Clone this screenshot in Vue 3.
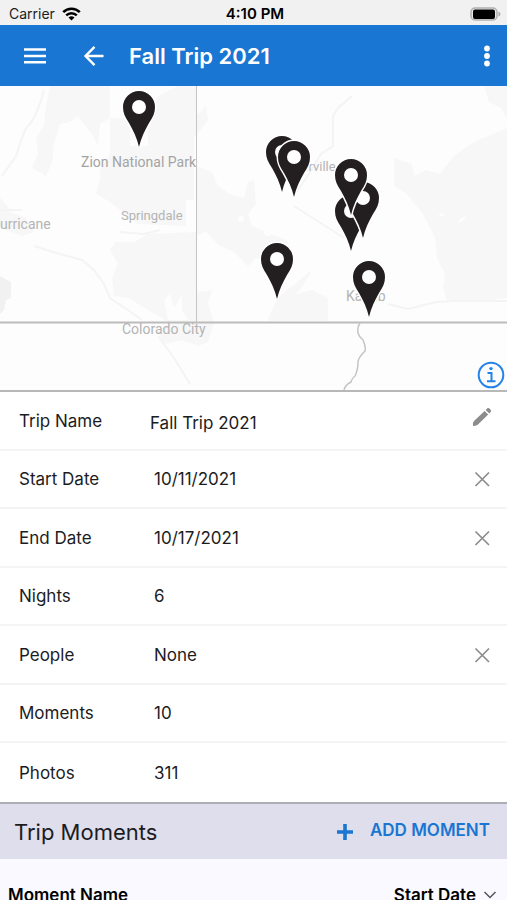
<script setup>
import { ref } from 'vue';

const tripName = ref('Fall Trip 2021');

const details = ref([
  { label: 'Start Date', value: '10/11/2021', clearable: true },
  { label: 'End Date', value: '10/17/2021', clearable: true },
  { label: 'Nights', value: '6' },
  { label: 'People', value: 'None', clearable: true },
  { label: 'Moments', value: '10' },
  { label: 'Photos', value: '311' },
]);

// Tip of each pin on the map, back to front
const pins = [
  { x: 139, y: 61 },
  { x: 282, y: 106 },
  { x: 294, y: 111 },
  { x: 351, y: 165 },
  { x: 363, y: 152 },
  { x: 351, y: 129 },
  { x: 277, y: 213 },
  { x: 369, y: 231 },
];

const clearValue = (row) => {
  row.value = 'None';
};
</script>

<template>
  <div class="app">
    <div class="status-bar">
      <div class="carrier">
        <span>Carrier</span>
        <svg width="19" height="14" viewBox="0 0 19 14" fill="none" stroke="#000">
          <path d="M1.2 5.2a11.8 11.8 0 0 1 16.6 0" stroke-width="2.6" />
          <path d="M4.2 8.4a7.5 7.5 0 0 1 10.6 0" stroke-width="2.4" />
          <path d="M9.5 13.6L6.5 10.6a4.3 4.3 0 0 1 6 0z" fill="#000" stroke="none" />
        </svg>
      </div>
      <span class="time">4:10 PM</span>
      <div class="battery">
        <svg width="31" height="14" viewBox="0 0 31 14">
          <rect x="1" y="1" width="26" height="12" rx="4" fill="#e8e8e8" stroke="#b0b0b0" stroke-width="1.5" />
          <rect x="3" y="2.5" width="22" height="9.5" rx="2" fill="#000" />
          <path d="M28.5 4.5q2 1 2 2.5t-2 2.5z" fill="#a8a8a8" />
        </svg>
      </div>
    </div>

    <header class="toolbar">
      <button class="icon-btn" aria-label="Menu">
        <svg width="24" height="24" viewBox="0 0 24 24" stroke="#fff" stroke-width="2.4">
          <path d="M1 5.5h22M1 12h22M1 18.3h22" />
        </svg>
      </button>
      <button class="icon-btn back" aria-label="Back">
        <svg width="22" height="22" viewBox="0 0 22 22" fill="none" stroke="#fff" stroke-width="2.4">
          <path d="M20.5 11H3M11.500 1.800L2.500 11l9 9.200" />
        </svg>
      </button>
      <h1>{{ tripName }}</h1>
      <button class="icon-btn" aria-label="More">
        <svg width="8" height="24" viewBox="0 0 8 24" fill="#fff">
          <circle cx="4" cy="4.5" r="2.9" />
          <circle cx="4" cy="12" r="2.9" />
          <circle cx="4" cy="19.5" r="2.9" />
        </svg>
      </button>
    </header>

    <div class="map">
      <svg class="map-canvas" viewBox="0 0 507 304" preserveAspectRatio="xMidYMid slice">
        <rect width="507" height="304" fill="#fdfdfd" />

        <!-- Terrain -->
        <g fill="#f7f7f7">
          <path d="M50 0h60v32l-10 6-2 22-6-12-14-18-8 6-10 2-6 20-2 18-6 14-6-4-8-4 6-14-2-16 8-12 2-20z" />
          <path d="M110 32h20v28h18V30l10-20 20-10h18v30l10-10 2 14-6 8-8 10v62h-8v26l-48-2-28-22-14-8 4-16V84l10-16z" />
          <path d="M196 80l16 6 6 14 12 8 14 4 4-16 6-2 2 24-8 10 4 12 34 14 8 14-18 10-20-6-8 8-14-14-14-6-14-14-10 4z" />
          <path d="M0 112l6 6 4 8 16 6 8 14-12 4-22-8z" />
          <path d="M134 156l14-8 48-2v90h-28l-20-12-20-12-14-2-2-18 6-14-8-14 6-8z" />
          <path d="M196 206l16-2-4 14 6 18-6 20-10 4-16-6-18 4-6-12 14-10h24z" />
          <path d="M268 232l10-20 12-10 22-18-8 14-8 10 16-4 16 8v23h-58z" />
          <path d="M394 72l18 6 2 12 12-6 14 4 14-18 20-14 33-14v170l-30 4-30-2-4-12 2-14-8-16-2-20-12-24-16-20-13-8z" />
          <path d="M484 0h23v32l-6-10-12-6z" />
        </g>
        <path d="M0 190l11 6v16l-5 2-2 10-4 4z" fill="#f1f1f1" />
        <g fill="#fdfdfd">
          <path d="M164 214l6-6 4 14 8-14v16l6 10h-20z" />
          <circle cx="268" cy="146" r="4" />
          <circle cx="241" cy="133" r="3" />
          <path d="M458 138q1-7 8-8l-2 4zM438 130l4-3 3 3z" />
        </g>
        <g fill="none" stroke="#f4f4f4" stroke-width="2">
          <path d="M44 4q-8 30-18 38-6 14-10 28L2 90" />
          <path d="M34 160l26 8 22 6 12 10 10 14 6 14 18 12 14 10M158 250l16 22 16 26" />
          <path d="M352 10l-14 12-5 8v30l-12 8-12 20-14 20" />
          <path d="M388 218l20 5 28-7 18-1h53" />
          <path d="M0 124h22M120 146l24 2 16-4M294 120l50 32" />
        </g>

        <!-- State and county lines -->
        <path d="M196.500 0V236" stroke="#c4c4c4" />
        <path d="M0 236.500H507" stroke="#bcbcbc" stroke-width="2" />
        <path d="M360 237q-3 4-2 10 1 4 5 7 3 7 2 11-7 7-7 11 0 8-3 14-3 2-4 6-6 3-7 8" fill="none" stroke="#c4c4c4" stroke-width="1.500" />

        <g class="labels">
          <text x="81" y="81" class="park">Zion National Park</text>
          <text x="121" y="134">Springdale</text>
          <text x="-10" y="143" class="town">Hurricane</text>
          <text x="122" y="248" class="town">Colorado City</text>
          <text x="281" y="85">Orderville</text>
          <text x="346" y="215" class="town">Kanab</text>
        </g>

        <g v-for="(pin, i) in pins" :key="i" :transform="`translate(${pin.x} ${pin.y})`">
          <path
            class="pin"
            d="M0 0C-2-9-6-17-10-24-14-30-16-34-16-40a16 16 0 0 1 32 0C16-34 14-30 10-24 6-17 2-9 0 0z"
          />
          <circle cy="-40" r="7" fill="#fff" />
        </g>
      </svg>
      <button class="map-info" aria-label="Map information">
        <svg width="28" height="28" viewBox="0 0 28 28" fill="none" stroke="#2583e8" stroke-width="2">
          <circle cx="14" cy="14" r="12.300" />
          <path d="M10.500 12h4v8M10 20.300h8.500" />
          <circle cx="14" cy="7.600" r="1.700" fill="#2583e8" stroke="none" />
        </svg>
      </button>
    </div>

    <div class="details">
      <div class="row">
        <label class="label" for="trip-name">Trip Name</label>
        <input id="trip-name" v-model="tripName" class="name-input" type="text" />
        <button class="icon-btn edit" aria-label="Edit trip name">
          <svg width="20" height="20" viewBox="0 0 20 20" fill="#8c8c8c">
            <path d="M1 19q-.6-3.400 1-5L12.600 4l3.600 3.600L6 17.600Q4.400 19.200 1 19zM13.700 2.900l1.600-1.600q1-.8 1.900 0l1.600 1.700q.8.900 0 1.800l-1.500 1.700z" />
          </svg>
        </button>
      </div>
      <div v-for="row in details" :key="row.label" class="row">
        <span class="label">{{ row.label }}</span>
        <span class="value">{{ row.value }}</span>
        <button v-if="row.clearable" class="icon-btn" :aria-label="`Clear ${row.label}`" @click="clearValue(row)">
          <svg width="20" height="20" viewBox="0 0 20 20" stroke="#8c8c8c" stroke-width="1.700">
            <path d="M3.500 3.500l13.500 13.500M17 3.500l-13.500 13.500" />
          </svg>
        </button>
      </div>
    </div>

    <div class="moments-bar">
      <h2>Trip Moments</h2>
      <button class="add-btn">
        <svg width="18" height="18" viewBox="0 0 18 18" stroke="#1976d2" stroke-width="3.600">
          <path d="M9 1v16M1 9h16" />
        </svg>
        <span>ADD MOMENT</span>
      </button>
    </div>

    <div class="list-head">
      <span>Moment Name</span>
      <button class="sort-btn">
        Start Date
        <svg width="14" height="10" viewBox="0 0 14 10" fill="none" stroke="#555" stroke-width="1.500">
          <path d="M1.500 2L7 7.500 12.500 2" />
        </svg>
      </button>
    </div>
  </div>
</template>

<style>
body {
  margin: 0;
  background: #fff;
}
</style>

<style scoped>
.app {
  display: flex;
  flex-direction: column;
  height: 100vh;
  overflow: hidden;
  font-family: Inter, "Liberation Sans", sans-serif;
  font-size: 17px;
  color: #1c1c1e;
}

.app > * {
  flex-shrink: 0;
}

button {
  padding: 0;
  border: 0;
  background: none;
  font: inherit;
  color: inherit;
  cursor: pointer;
}

svg {
  display: block;
}

.icon-btn {
  display: flex;
  align-items: center;
  justify-content: center;
}

/* Status bar */
.status-bar {
  display: grid;
  grid-template-columns: 1fr auto 1fr;
  align-items: center;
  height: 25px;
  padding: 2px 6px 0 9px;
  box-sizing: border-box;
  background: #f1f1f1;
  font-size: 14px;
  line-height: 20px;
}

.carrier {
  display: flex;
  align-items: center;
  gap: 7px;
}

.time {
  font-size: 15px;
  font-weight: 600;
  color: #000;
}

.battery {
  display: flex;
  justify-content: flex-end;
}

/* Toolbar */
.toolbar {
  display: flex;
  align-items: center;
  height: 61px;
  padding: 0 16px 0 23px;
  box-sizing: border-box;
  background: #1976d2;
  color: #fff;
}

.back {
  margin: 0 24px 0 36px;
}

h1 {
  flex: 1;
  margin: 0;
  font-size: 22px;
  font-weight: 600;
  line-height: 28px;
}

/* Map */
.map {
  position: relative;
  border-bottom: 2px solid #b8b8b8;
}

.map-canvas {
  width: 100%;
  height: 304px;
}

.labels {
  font-family: Roboto, sans-serif;
  font-size: 13px;
  fill: #b4b4b4;
}

.labels .park {
  font-size: 14px;
  fill: #a4a4a4;
}

.labels .town {
  font-size: 14px;
}

.pin {
  fill: #231f20;
  stroke: #fff;
  stroke-width: 3px;
  paint-order: stroke;
}

.map-info {
  position: absolute;
  right: 2px;
  bottom: 1px;
}

/* Trip details */
.row {
  display: flex;
  align-items: center;
  height: 58px;
  padding: 0 15px 0 19px;
  box-sizing: border-box;
  border-bottom: 2px solid #f4f4f4;
}

.row:nth-child(odd) {
  height: 59px;
}

.row:last-child {
  border-bottom: 0;
}

.label {
  width: 135px;
}

.value {
  flex: 1;
}

.name-input {
  flex: 1;
  min-width: 0;
  margin-left: -4px;
  padding: 4px 0 0;
  border: 0;
  outline: 0;
  background: none;
  font: inherit;
  color: inherit;
}

.edit {
  padding-bottom: 8px;
}

/* Moments */
.moments-bar {
  display: flex;
  align-items: center;
  justify-content: space-between;
  height: 57px;
  padding: 0 17px 0 14px;
  box-sizing: border-box;
  border-top: 2px solid #adadb5;
  background: #dedeed;
}

h2 {
  margin: 0;
  font-size: 22px;
  font-weight: 400;
  line-height: 32px;
}

.add-btn {
  display: flex;
  align-items: center;
  gap: 16px;
  font-weight: 600;
  color: #1976d2;
}

.add-btn span {
  padding-bottom: 3px;
}

.list-head {
  display: flex;
  flex: 1;
  align-items: flex-start;
  justify-content: space-between;
  min-height: 0;
  padding: 24px 10px 0 8px;
  background: #f9f9ff;
  font-weight: 600;
  line-height: 24px;
  color: #000;
}

.sort-btn {
  display: flex;
  align-items: center;
  gap: 7px;
}
</style>
